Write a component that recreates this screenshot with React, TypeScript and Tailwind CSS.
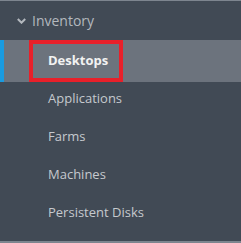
const items = ['Desktops', 'Applications', 'Farms', 'Machines', 'Persistent Disks'];

export default function App() {
  return (
    <div className="w-[241px] h-[243px] bg-[#414a55] border-t border-b-2 border-[#7d858f] font-['Open_Sans',sans-serif] overflow-hidden">
      <div className="flex items-center h-[39px] pl-[17px] gap-[6px] text-[14px] text-[#b3b8be]">
        <svg width="9" height="6" viewBox="0 0 9 6" fill="none" stroke="currentColor" strokeWidth="2">
          <polyline points="0.8,1 4.5,4.7 8.2,1" />
        </svg>
        <span>Inventory</span>
      </div>
      <div className="flex flex-col">
        {items.map((name, i) =>
          i === 0 ? (
            <div key={name} className="flex items-center h-[42px] bg-[#6c737d] border-l-4 border-[#1a9be0]">
              <div className="ml-[25px] h-[42px] w-[94px] border-4 border-[#e8202a] flex items-center pl-[15px] text-[13px] font-bold text-[#f2f2f2]">
                {name}
              </div>
            </div>
          ) : (
            <div key={name} className="flex items-center h-[38px] pb-[4px] pl-[48px] text-[13px] text-[#c5c9ce]">
              {name}
            </div>
          )
        )}
      </div>
    </div>
  );
}
